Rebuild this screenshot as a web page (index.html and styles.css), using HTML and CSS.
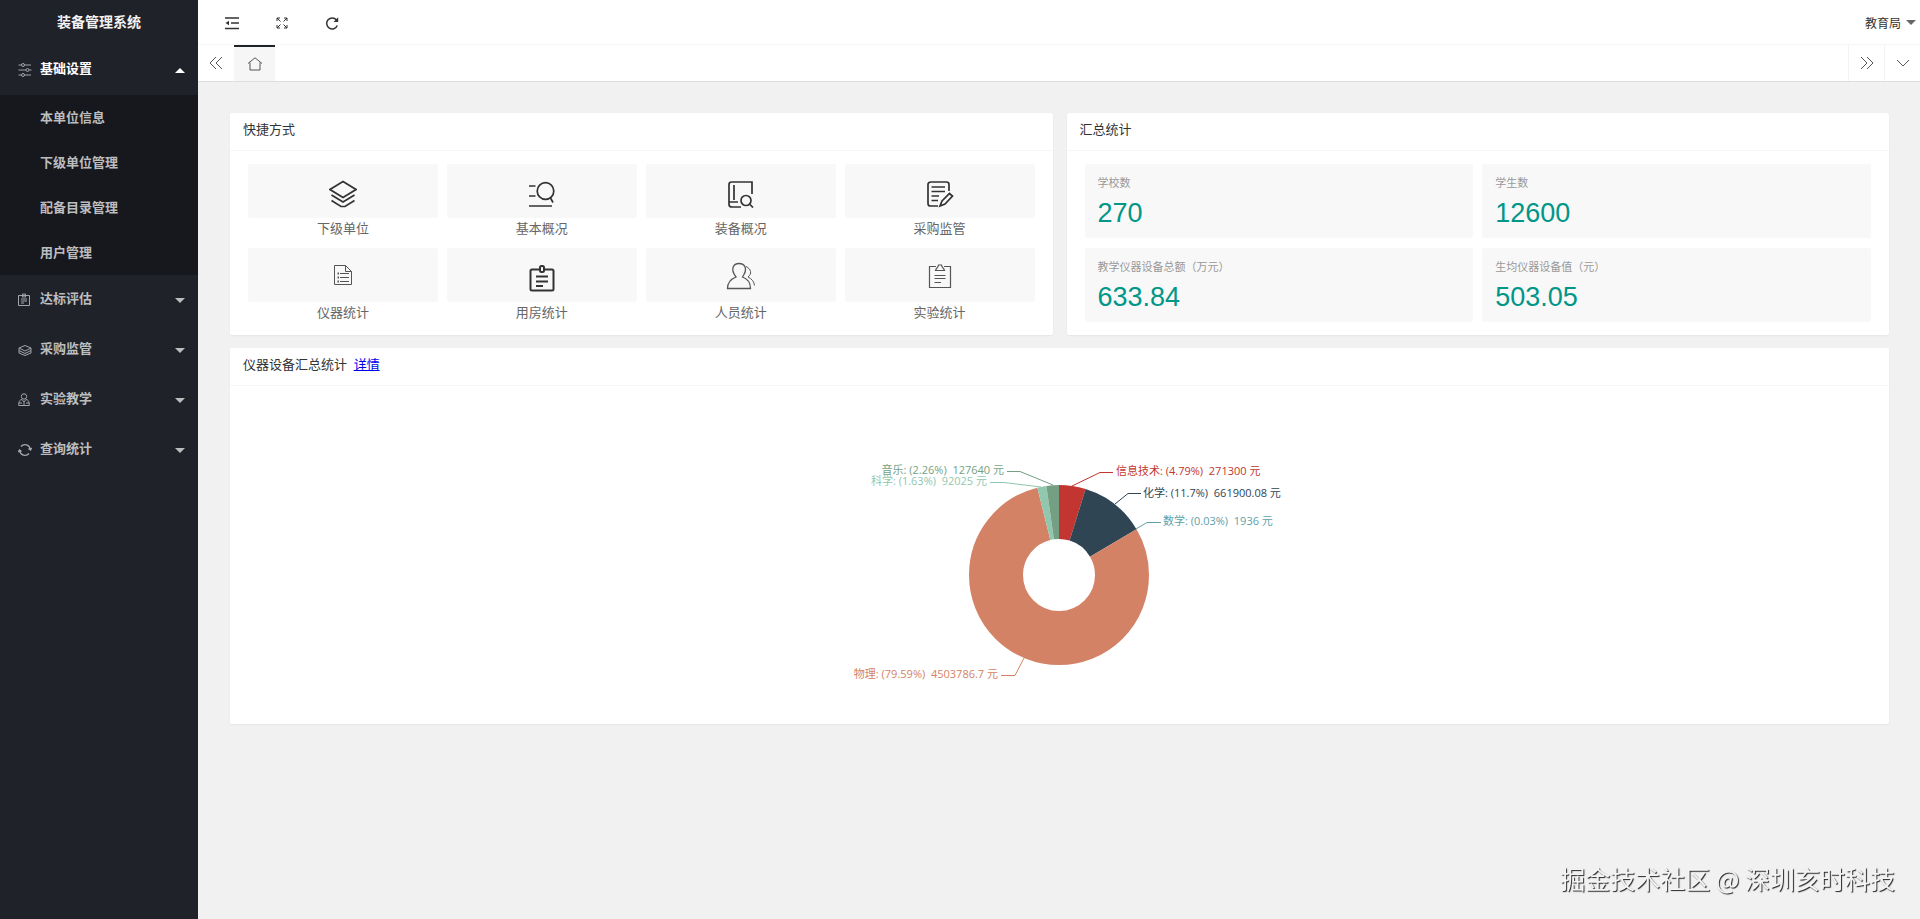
FILE: index.html
```html
<!DOCTYPE html>
<html lang="zh-CN">
<head>
    <meta charset="utf-8">
    <title>装备管理系统</title>
    <link rel="stylesheet" href="styles.css">
</head>
<body>
<div class="side">
    <div class="logo">装备管理系统</div>
    <ul class="nav">
        <li class="nav-item open">
            <a href="#">
                <svg class="nav-icon" viewBox="0 0 14 14"><path d="M0.500 2H3.500M6.500 2H13M0.500 7H8M11 7H13.500M0.500 12H3.500M6.500 12H13"/><circle cx="5" cy="2" r="1.500"/><circle cx="9.500" cy="7" r="1.500"/><circle cx="5" cy="12" r="1.500"/></svg>
                <span>基础设置</span><i class="arrow up"></i>
            </a>
            <ul class="sub-nav">
                <li><a href="#">本单位信息</a></li>
                <li><a href="#">下级单位管理</a></li>
                <li><a href="#">配备目录管理</a></li>
                <li><a href="#">用户管理</a></li>
            </ul>
        </li>
        <li class="nav-item">
            <a href="#">
                <svg class="nav-icon" viewBox="0 0 14 14"><path d="M0.500 2.500H11.500V12.500H0.500ZM4.500 1H7.500V4H4.500ZM3 6H9M3 8H9M3 10H6"/></svg>
                <span>达标评估</span><i class="arrow"></i>
            </a>
        </li>
        <li class="nav-item">
            <a href="#">
                <svg class="nav-icon" viewBox="0 0 14 14"><path d="M7 2.500L13 5L7 8L1 5ZM1 5V7.500L7 10.500L13 7.500V5M1 7.500V10L7 12.500L13 10V7.500"/></svg>
                <span>采购监管</span><i class="arrow"></i>
            </a>
        </li>
        <li class="nav-item">
            <a href="#">
                <svg class="nav-icon" viewBox="0 0 14 14"><circle cx="6" cy="3.500" r="2.700"/><path d="M4 6.500C1.500 7 0.700 8.500 0.700 12.500H11.300C11.300 8.500 10.500 7 8 6.500M4 6.500L6 9L8 6.500M6 9V12M1 10H4M8 10H11"/></svg>
                <span>实验教学</span><i class="arrow"></i>
            </a>
        </li>
        <li class="nav-item">
            <a href="#">
                <svg class="nav-icon" viewBox="0 0 14 14"><path d="M3 3.500A5.300 5.300 0 0 1 12.300 6.500M11 10.500A5.300 5.300 0 0 1 1.700 7.500M10.500 5.500L12.400 7L13.800 5M0.200 9L1.600 7L3.500 8.500" stroke-width="1.400"/></svg>
                <span>查询统计</span><i class="arrow"></i>
            </a>
        </li>
    </ul>
</div>

<div class="main">
    <div class="header">
        <button type="button" aria-label="侧边伸缩">
            <svg width="14" height="14" viewBox="0 0 14 14"><path d="M0 2H14M6 7H14M0 12.500H14" stroke-width="1.500"/><path d="M4 4.800V9.200L0.500 7Z" fill="#333" stroke="none"/></svg>
        </button>
        <button type="button" aria-label="全屏">
            <svg width="12" height="12" viewBox="0 0 12 12"><path d="M1 4V1H4M1 1L4.500 4.500M8 1H11V4M11 1L7.500 4.500M1 8V11H4M1 11L4.500 7.500M11 8V11H8M11 11L7.500 7.500"/></svg>
        </button>
        <button type="button" aria-label="刷新">
            <svg width="14" height="14" viewBox="0 0 14 14"><path d="M11.500 4A5.500 5.500 0 1 0 12.300 9.500" stroke-width="1.500"/><path d="M13.200 1.300V6H8.500Z" fill="#333" stroke="none"/></svg>
        </button>
        <a class="user" href="#">教育局 <i class="arrow"></i></a>
    </div>
    <div class="tabs">
        <button type="button" aria-label="左移"><svg width="14" height="14" viewBox="0 0 14 14"><path d="M7 1L1 7L7 13M13 1L7 7L13 13"/></svg></button>
        <button type="button" class="home" aria-label="主页"><svg width="16" height="14" viewBox="0 0 16 14"><path d="M1 6.500L8 0.800L15 6.500M3 5.500V13H13V5.500"/></svg></button>
        <button type="button" class="tab-right" aria-label="右移"><svg width="14" height="14" viewBox="0 0 14 14"><path d="M1 1L7 7L1 13M7 1L13 7L7 13"/></svg></button>
        <button type="button" class="tab-down" aria-label="更多"><svg width="14" height="14" viewBox="0 0 14 14"><path d="M1 4L7 10L13 4"/></svg></button>
    </div>

    <div class="content">
        <div class="card">
            <div class="card-header">快捷方式</div>
            <div class="card-body shortcuts">
                <a href="#">
                    <span class="tile"><svg viewBox="0 0 28 28"><path d="M14 1.500L27 9.500L14 17.500L1 9.500ZM2.500 15L14 22L25.500 15M2.500 20.500L12 26.500H16L25.500 20.500"/></svg></span>
                    下级单位
                </a>
                <a href="#">
                    <span class="tile"><svg viewBox="0 0 28 28"><circle cx="17.500" cy="11" r="8.300"/><path d="M22.500 18L25 22.500M1 6H7.500M1 16H7.500M1 26H24"/></svg></span>
                    基本概况
                </a>
                <a href="#">
                    <span class="tile"><svg viewBox="0 0 28 28"><path d="M25 14V2H4.500Q2 2 2 4.500V24.500Q2 27 5 27H14M7 5V20M2.500 22H11"/><circle cx="19" cy="20.500" r="5"/><path d="M23 24.500L26 27.500"/></svg></span>
                    装备概况
                </a>
                <a href="#">
                    <span class="tile"><svg viewBox="0 0 28 28"><path d="M23 11V4.500Q23 2 20.500 2H5Q2 2 2 4.500V23.500Q2 26 4.500 26H12M5.500 7H19M5.500 11.500H19M5.500 16H13M5.500 20.500H12M14 26L16 21L23.500 13.500L26.500 16L19 24Z"/></svg></span>
                    采购监管
                </a>
                <a href="#">
                    <span class="tile thin"><svg viewBox="0 0 28 28"><path d="M5.500 1.500H16.500L22.500 7.500V20.500H5.500ZM16.500 1.500V7.500H22.500M11 9.500H20M11 13.500H20M11 17.500H20"/><path d="M8.500 9.500H10M8.500 13.500H10M8.500 17.500H10" stroke-width="1.800"/></svg></span>
                    仪器统计
                </a>
                <a href="#">
                    <span class="tile bold"><svg viewBox="0 0 28 28"><rect x="2.500" y="5.500" width="23" height="21" rx="1.500"/><rect x="12" y="2" width="4" height="6" rx="1.500" fill="#f8f8f8"/><path d="M8 12.500H20M8 17.500H20M8 22H15"/></svg></span>
                    用房统计
                </a>
                <a href="#">
                    <span class="tile thin"><svg viewBox="0 0 28 28"><path d="M9 13C2.500 4.500 7 -0.500 12 -0.500C17.500 -0.500 21.500 4.500 15.500 13C21 15 23.500 18.500 23.500 24.500H0.500C0.500 18.500 4 15 9 13Z" stroke-width="1.300"/><path d="M19 2.500C24.500 5 25 10 21 13C25 15 27 17.500 27.500 21.500"/></svg></span>
                    人员统计
                </a>
                <a href="#">
                    <span class="tile thin"><svg viewBox="0 0 28 28"><path d="M10 2.500H3.500V23.500H24.500V2.500H18M9.500 6.500C10.500 3.500 12 4 12.500 1H15.500C16 4 17.500 3.500 18.500 6.500ZM8.500 11.500H19.500M8.500 14.500H19.500M8.500 18.500H15" stroke-width="1.200"/></svg></span>
                    实验统计
                </a>
            </div>
        </div>

        <div class="card">
            <div class="card-header">汇总统计</div>
            <div class="card-body stats">
                <div class="stat"><h3>学校数</h3><p>270</p></div>
                <div class="stat"><h3>学生数</h3><p>12600</p></div>
                <div class="stat"><h3>教学仪器设备总额（万元）</h3><p>633.84</p></div>
                <div class="stat"><h3>生均仪器设备值（元）</h3><p>503.05</p></div>
            </div>
        </div>

        <div class="card wide">
            <div class="card-header">仪器设备汇总统计 <a href="#">详情</a></div>
            <div class="chart">
                <svg width="480" height="338" viewBox="1 0 480 338">
                    <!-- ring, one arc per subject, in percent of the circle -->
                    <g class="ring" transform="rotate(-90 240 189)">
                        <circle cx="240" cy="189" r="63" pathLength="100" stroke="#c23531" stroke-dasharray="4.79 95.21"/>
                        <circle cx="240" cy="189" r="63" pathLength="100" stroke="#2f4554" stroke-dasharray="11.7 88.3" stroke-dashoffset="-4.79"/>
                        <circle cx="240" cy="189" r="63" pathLength="100" stroke="#61a0a8" stroke-dasharray="0.03 99.97" stroke-dashoffset="-16.49"/>
                        <circle cx="240" cy="189" r="63" pathLength="100" stroke="#d48265" stroke-dasharray="79.59 20.41" stroke-dashoffset="-16.52"/>
                        <circle cx="240" cy="189" r="63" pathLength="100" stroke="#91c7ae" stroke-dasharray="1.63 98.37" stroke-dashoffset="-96.11"/>
                        <circle cx="240" cy="189" r="63" pathLength="100" stroke="#749f83" stroke-dasharray="2.26 97.74" stroke-dashoffset="-97.74"/>
                    </g>
                    <g class="lines">
                        <path d="M253 100L281 86.500H294" stroke="#c23531"/>
                        <path d="M296 118L309 107.500H322" stroke="#2f4554"/>
                        <path d="M317 143L328 136.500H342" stroke="#61a0a8"/>
                        <path d="M205 272L196 289.500H182" stroke="#d48265"/>
                        <path d="M222 101L185 96.500H171" stroke="#91c7ae"/>
                        <path d="M234 99L201 85.500H188" stroke="#749f83"/>
                    </g>
                    <g class="labels">
                        <text x="297" y="89" fill="#c23531">信息技术: (4.79%)  271300 元</text>
                        <text x="324" y="111" fill="#2f4554">化学: (11.7%)  661900.08 元</text>
                        <text x="344" y="139" fill="#61a0a8">数学: (0.03%)  1936 元</text>
                        <text x="179" y="292" fill="#d48265" text-anchor="end">物理: (79.59%)  4503786.7 元</text>
                        <text x="168" y="99" fill="#91c7ae" text-anchor="end">科学: (1.63%)  92025 元</text>
                        <text x="185" y="88" fill="#749f83" text-anchor="end">音乐: (2.26%)  127640 元</text>
                    </g>
                </svg>
            </div>
        </div>
    </div>
</div>
<div class="watermark">掘金技术社区 @ 深圳亥时科技</div>
</body>
</html>
```
FILE: styles.css
```css
* {
    box-sizing: border-box;
}

body {
    margin: 0;
    display: flex;
    min-height: 100vh;
    background-color: #f1f1f1;
    color: #333;
    font-family: "Liberation Sans", "Noto Sans CJK SC", sans-serif;
    font-size: 13px;
}

ul {
    list-style: none;
    margin: 0;
    padding: 0;
}

a {
    color: inherit;
    text-decoration: none;
}

button {
    display: flex;
    align-items: center;
    justify-content: center;
    padding: 0;
    border: 0;
    background: none;
    cursor: pointer;
}

svg {
    fill: none;
    stroke: #333;
}

/* sidebar */
.side {
    flex: none;
    width: 198px;
    background-color: #20222a;
    color: #bcbdbf;
    font-weight: bold;
}

.logo {
    height: 45px;
    line-height: 44px;
    font-size: 14px;
    text-align: center;
    color: #f2f2f2;
}

.nav-item > a {
    display: flex;
    align-items: center;
    height: 50px;
    padding: 0 13px 0 18px;
    line-height: 20px;
}

.nav-item span {
    padding-bottom: 2px;
}

.nav-item.open > a {
    color: #fff;
}

.nav-icon {
    width: 14px;
    height: 14px;
    margin-right: 8px;
    stroke: #a4a5a9;
}

.arrow {
    border: 5px solid transparent;
    border-top-color: currentColor;
    border-bottom: 0;
}

.arrow.up {
    border-top: 0;
    border-bottom: 5px solid #fff;
}

.nav .arrow {
    margin-left: auto;
}

.sub-nav {
    background-color: #16181d;
}

.sub-nav a {
    display: block;
    line-height: 45px;
    padding-left: 40px;
}

/* top bars */
.main {
    flex: 1;
    min-width: 0;
}

.header {
    display: flex;
    align-items: center;
    height: 45px;
    padding: 0 4px 0 9px;
    background-color: #fff;
    border-bottom: 1px solid #f6f6f6;
}

.header button {
    width: 50px;
    height: 44px;
    padding-top: 2px;
}

.user {
    display: flex;
    align-items: center;
    gap: 5px;
    margin-left: auto;
    font-size: 12px;
}

.user .arrow {
    border-top-color: #666;
}

.tabs {
    display: flex;
    height: 37px;
    background-color: #fff;
    border-bottom: 1px solid #dedede;
}

.tabs button {
    width: 36px;
}

.tabs svg {
    stroke: #555;
}

.tabs .home {
    width: 41px;
    border-top: 2px solid #20222a;
    background-color: #f6f6f6;
}

.tabs .tab-right {
    margin-left: auto;
    border-left: 1px solid #f3f3f3;
}

.tabs .tab-down {
    border-left: 1px solid #f3f3f3;
}

/* content */
.content {
    display: grid;
    grid-template-columns: 1fr 1fr;
    gap: 13px 14px;
    padding: 31px;
    padding-left: 32px;
}

.card {
    background-color: #fff;
    border-radius: 2px;
    box-shadow: 0 1px 2px rgba(0, 0, 0, 0.05);
}

.wide {
    grid-column: span 2;
}

.card-header {
    height: 38px;
    line-height: 34px;
    padding: 0 13px;
    border-bottom: 1px solid #f6f6f6;
}

.card-header a {
    margin-left: 3px;
    color: #0000ee;
    text-decoration: underline;
}

.card-body {
    display: grid;
    gap: 8px 9px;
    padding: 13px 18px 11px;
}

.shortcuts {
    grid-template-columns: repeat(4, 1fr);
}

.shortcuts a {
    line-height: 22px;
    text-align: center;
    color: #666;
}

.tile {
    display: flex;
    align-items: center;
    justify-content: center;
    height: 54px;
    padding-top: 5px;
    background-color: #f8f8f8;
    border-radius: 2px;
}

.tile svg {
    width: 28px;
    height: 28px;
    stroke-width: 1.7;
}

.tile.thin svg {
    stroke: #555;
    stroke-width: 1;
    overflow: visible;
}

.tile.bold svg {
    stroke-width: 2;
}

.stats {
    grid-template-columns: 1fr 1fr;
    row-gap: 10px;
    padding-bottom: 13px;
}

.stat {
    height: 74px;
    padding: 11px 13px;
    background-color: #f8f8f8;
    border-radius: 2px;
}

.stat h3 {
    margin: 0;
    font-size: 11px;
    font-weight: normal;
    line-height: 16px;
    color: #999;
}

.stat p {
    margin: 6px 0 0;
    font-size: 27px;
    line-height: 32px;
    color: #009688;
}

.chart {
    display: flex;
    justify-content: center;
}

.ring {
    stroke-width: 54;
}

.labels {
    stroke: none;
    font-family: "Open Sans", "Noto Sans CJK SC", sans-serif;
    font-size: 11px;
}

.labels text {
    white-space: pre;
}

.watermark {
    position: fixed;
    right: 25px;
    bottom: 23px;
    font-family: "Noto Sans CJK SC", sans-serif;
    font-size: 25px;
    color: #f4f4f4;
    text-shadow: 1px 1px 1px #222;
}
```
